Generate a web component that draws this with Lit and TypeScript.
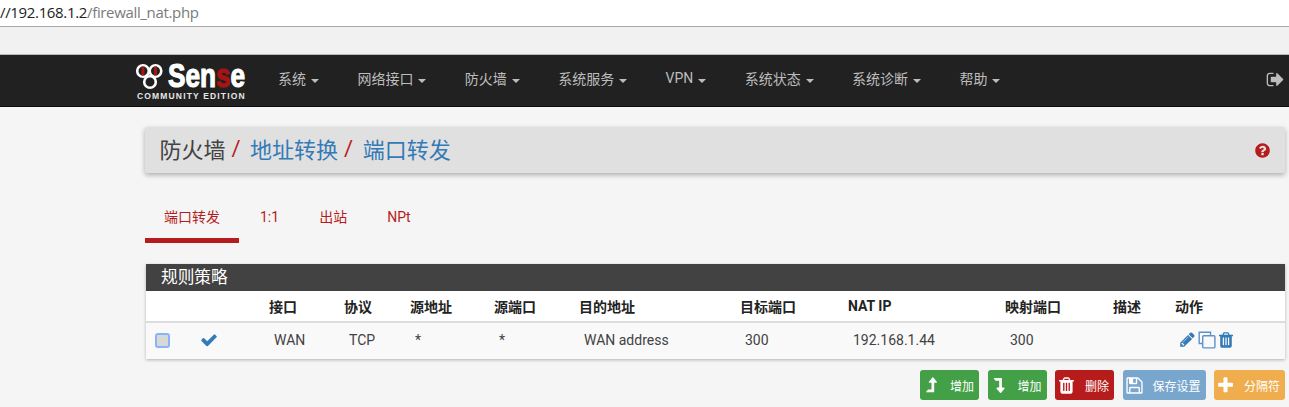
import { LitElement, html, css, svg } from "lit";
import { customElement } from "lit/decorators.js";

const ICON: Record<string, { vb: string; d: string }> = {
  check: { vb: "0 0 1792 1792", d: "M1671 566q0 40-28 68l-724 724-136 136q-28 28-68 28t-68-28l-136-136-362-362q-28-28-28-68t28-68l136-136q28-28 68-28t68 28l294 295 656-657q28-28 68-28t68 28l136 136q28 28 28 68z" },
  pencil: { vb: "0 0 1792 1792", d: "M491 1536l91-91-235-235-91 91v107h128v128h107zm523-928q0-22-22-22-10 0-17 7l-542 542q-7 7-7 17 0 22 22 22 10 0 17-7l542-542q7-7 7-17zm-54-192l416 416-832 832h-416v-416zm683 96q0 53-37 90l-166 166-416-416 166-165q36-38 90-38 53 0 91 38l235 234q37 39 37 91z" },
  trash: { vb: "0 0 1792 1792", d: "M704 1376v-704q0-14-9-23t-23-9h-64q-14 0-23 9t-9 23v704q0 14 9 23t23 9h64q14 0 23-9t9-23zm256 0v-704q0-14-9-23t-23-9h-64q-14 0-23 9t-9 23v704q0 14 9 23t23 9h64q14 0 23-9t9-23zm256 0v-704q0-14-9-23t-23-9h-64q-14 0-23 9t-9 23v704q0 14 9 23t23 9h64q14 0 23-9t9-23zm-544-992h448l-48-117q-7-9-17-11h-317q-10 2-17 11zm928 32v64q0 14-9 23t-23 9h-96v948q0 83-47 143.500t-113 60.500h-832q-66 0-113-58.500t-47-141.500v-952h-96q-14 0-23-9t-9-23v-64q0-14 9-23t23-9h309l70-167q15-37 54-63t79-26h320q40 0 79 26t54 63l70 167h309q14 0 23 9t9 23z" },
  question: { vb: "0 0 1792 1792", d: "M1024 1376v-192q0-14-9-23t-23-9h-192q-14 0-23 9t-9 23v192q0 14 9 23t23 9h192q14 0 23-9t9-23zm256-672q0-88-55.500-163t-138.500-116-170-41q-243 0-371 213-15 24 8 42l132 100q7 6 19 6 16 0 25-12 53-68 86-92 34-24 86-24 48 0 85.500 26t37.500 59q0 38-20 61t-68 45q-63 28-115.500 86.500t-52.500 125.500v36q0 14 9 23t23 9h192q14 0 23-9t9-23q0-19 21.500-49.500t54.500-49.500q32-18 49-28.500t46-35 44.500-48 28-60.500 12.500-81zm384 192q0 209-103 385.500t-279.500 279.500-385.500 103-385.500-103-279.500-279.500-103-385.500 103-385.500 279.500-279.500 385.500-103 385.500 103 279.500 279.500 103 385.500z" },
  signout: { vb: "0 0 1792 1792", d: "M704 1440q0 4 1 20t.5 26.500-3 23.500-10 19.500-20.500 6.500h-320q-119 0-203.500-84.500t-84.500-203.500v-704q0-119 84.500-203.500t203.500-84.500h320q13 0 22.500 9.500t9.500 22.500q0 4 1 20t.5 26.500-3 23.500-10 19.500-20.500 6.500h-320q-66 0-113 47t-47 113v704q0 66 47 113t113 47h312l11.500 1 11.500 3 8 5.500 7 9 2 13.500zm928-544q0 26-19 45l-544 544q-19 19-45 19t-45-19-19-45v-288h-448q-26 0-45-19t-19-45v-384q0-26 19-45t45-19h448v-288q0-26 19-45t45-19 45 19l544 544q19 19 19 45z" },
  plus: { vb: "0 0 1792 1792", d: "M1600 736v192q0 40-28 68t-68 28h-416v416q0 40-28 68t-68 28h-192q-40 0-68-28t-28-68v-416h-416q-40 0-68-28t-28-68v-192q0-40 28-68t68-28h416v-416q0-40 28-68t68-28h192q40 0 68 28t28 68v416h416q40 0 68 28t28 68z" },
  save: { vb: "0 0 1792 1792", d: "M512 1536h768v-384h-768v384zm896 0h128v-896q0-14-10-38.500t-20-34.500l-281-281q-10-10-34-20t-39-10v416q0 40-28 68t-68 28h-576q-40 0-68-28t-28-68v-416h-128v1280h128v-416q0-40 28-68t68-28h832q40 0 68 28t28 68v416zm-384-928v-320q0-13-9.500-22.500t-22.500-9.500h-192q-13 0-22.500 9.500t-9.500 22.500v320q0 13 9.500 22.500t22.500 9.500h192q13 0 22.500-9.500t9.500-22.500zm640 32v928q0 40-28 68t-68 28h-1344q-40 0-68-28t-28-68v-1344q0-40 28-68t68-28h928q40 0 88 20t76 48l280 280q28 28 48 76t20 88z" },
  up: { vb: "0 0 1792 1792", d: "M1402 603q-18 37-58 37h-192v864q0 14-9 23t-23 9h-704q-21 0-29-18-8-20 4-35l160-192q9-11 25-11h320v-640h-192q-40 0-58-37-17-37 9-68l320-384q18-22 49-22t49 22l320 384q27 32 9 68z" },
  down: { vb: "0 0 1792 1792", d: "M386 192h704q14 0 23 9t9 23v864h192q40 0 58 37t-9 68l-320 384q-18 22-49 22t-49-22l-320-384q-26-31-9-68 18-37 58-37h192v-640h-320q-16 0-25-11l-160-192q-12-15-4-35 8-18 29-18z" },
};

const icon = (n: string, s: number, cls = "") =>
  html`<svg class="ic ${cls}" width=${s} height=${s} viewBox=${ICON[n].vb} fill="currentColor"><path d=${ICON[n].d}></path></svg>`;

const NAV = ["系统", "网络接口", "防火墙", "系统服务", "VPN", "系统状态", "系统诊断", "帮助"];
const HEAD = ["", "", "接口", "协议", "源地址", "源端口", "目的地址", "目标端口", "NAT IP", "映射端口", "描述", "动作"];
const CELLS = ["WAN", "TCP", "*", "*", "WAN address", "300", "192.168.1.44", "300"];

@customElement("app-root")
export class AppRoot extends LitElement {
  static styles = css`
    :host {
      display: block;
      height: 407px;
      overflow: hidden;
      background: #f5f5f5;
      font-family: Roboto, "Noto Sans CJK SC", sans-serif;
      font-size: 14px;
      color: #333;
    }
    .ic { display: block; flex: none; }
    .url {
      box-sizing: border-box;
      background: #fff;
      border-bottom: 1px solid #a9a9a9;
      height: 27px;
      font: 15px/25px "Open Sans", sans-serif;
      color: #222;
      white-space: nowrap;
      letter-spacing: -0.34px;
    }
    .url span { color: #7a7a7a; }
    .chrome { height: 28px; background: #f1f1f1; border-bottom: 1px solid #b9b9b9; box-sizing: border-box; }
    .nav {
      height: 52px;
      box-sizing: border-box;
      background: #212121;
      border-bottom: 1px solid #0b0b0b;
      display: flex;
      align-items: center;
      padding: 0 5px 0 135px;
      color: #bdbdbd;
    }
    .logo { width: 143px; flex: none; display: flex; flex-direction: column; }
    .logo-top { display: flex; height: 30px; align-items: center; }
    .sense {
      font: 900 34px/30px "Liberation Sans", sans-serif;
      color: #fff;
      -webkit-text-stroke: 1.2px #fff;
      transform: scaleX(0.77);
      transform-origin: 0 50%;
      margin-left: 2px;
      white-space: nowrap;
      width: 78px;
    }
    .sense b { color: #a81414; -webkit-text-stroke: 1.2px #a81414; font-weight: 900; }
    .edition {
      font: 700 8.5px/10px "Liberation Sans", sans-serif;
      color: #e6e6e6;
      letter-spacing: 1.16px;
      margin: 1px 0 0 2px;
      white-space: nowrap;
    }
    .menu { display: flex; gap: 38.4px; flex: 1; padding-bottom: 6px; }
    .menu-item { display: flex; align-items: center; white-space: nowrap; }
    .caret {
      margin-left: 5px;
      margin-top: 6px;
      border-top: 4px solid currentColor;
      border-left: 4px solid transparent;
      border-right: 4px solid transparent;
    }
    .out { margin: -3px -1px 0 0; }
    .page { padding: 20px 4px 0 145px; }
    .crumb {
      height: 46px;
      background: #e0e0e0;
      border-radius: 2px;
      box-shadow: 0 2px 5px rgba(0, 0, 0, 0.3);
      display: flex;
      align-items: center;
      padding: 0 14px 4px 14.5px;
      box-sizing: border-box;
      font-size: 22px;
      color: #424242;
    }
    .crumb a { color: #337ab7; }
    .sep { color: #b71c1c; margin: 0 9.5px 0 6px; font-family: Roboto, sans-serif; }
    .crumb .grow { flex: 1; }
    .help { color: #b71c1c; margin-top: 4px; }
    .tabs { display: flex; margin-top: 22px; height: 48px; box-sizing: border-box; }
    .tab {
      padding: 0 20px;
      height: 48px;
      line-height: 44px;
      box-sizing: border-box;
      font-size: 14px;
      color: #b71c1c;
    }
    .tab.on { border-bottom: 5px solid #b71c1c; padding: 0 19px; width: 94px; margin-right: 1px; }
    .panel {
      margin: 21px 0 0 1px;
      background: #fff;
      box-shadow: 0 1px 3px rgba(0, 0, 0, 0.28);
    }
    .title {
      height: 27px;
      background: #424242;
      color: #fff;
      font-size: 16.7px;
      line-height: 27px;
      padding-left: 15px;
    }
    .row {
      display: grid;
      grid-template-columns: 49px 69px 75px 66px 84px 85px 161px 108px 157px 108px 62px 115px;
      align-items: center;
    }
    .head { height: 32px; border-bottom: 2px solid #ddd; box-sizing: border-box; font-weight: 700; color: #222; }
    .head div { padding: 0 0 0 5px; margin-top: -1px; }
    .body { height: 36px; background: #f9f9f9; box-sizing: border-box; color: #424242; }
    .cell { padding-left: 10px; margin-top: -3px; }
    .cb {
      width: 11px;
      height: 11px;
      margin: -1px 0 0 9px;
      background: #d8d8d8;
      border: 2px solid #8ab4f8;
      border-radius: 3px;
    }
    .ok { color: #337ab7; margin: -3px 0 0 5px; }
    .acts { display: flex; align-items: center; padding-left: 9px; color: #337ab7; margin-top: -3px; }
    .clone { color: #5d91cc; margin: 1px 0 0 2px; }
    .bin { margin-left: 1px; }
    .btns { display: flex; justify-content: flex-end; gap: 8.5px; margin-top: 11px; }
    .btn {
      height: 30px;
      box-sizing: border-box;
      border-radius: 3px;
      display: flex;
      align-items: center;
      justify-content: space-between;
      padding: 0 5px 0 2px;
      color: #fff;
      font-size: 12px;
      white-space: nowrap;
    }
    .g { background: #43a047; width: 59px; }
    .r { background: #b71c1c; width: 59px; }
    .b { background: #79a6cd; width: 83px; }
    .o { background: #f0ad4e; width: 71px; }
  `;

  render() {
    return html`
      <div class="url">//192.168.1.2<span>/firewall_nat.php</span></div>
      <div class="chrome"></div>
      <div class="nav">
        <div class="logo">
          <div class="logo-top">
            <svg width="31" height="30" viewBox="0 0 31 30" fill="none">
              ${svg`
                <circle cx="8" cy="11" r="5.8" stroke="#fff" stroke-width="2.6"/>
                <circle cx="20.5" cy="11" r="5.8" stroke="#fff" stroke-width="2.6"/>
                <circle cx="15" cy="22" r="5.8" stroke="#fff" stroke-width="2.6"/>
                <rect x="6.5" y="6.5" width="3" height="9" fill="#a81414"/>
                <rect x="19" y="6.5" width="3" height="9" fill="#a81414"/>
              `}
            </svg>
            <div class="sense">Sen<b>s</b>e</div>
          </div>
          <div class="edition">COMMUNITY EDITION</div>
        </div>
        <div class="menu">
          ${NAV.map((n) => html`<div class="menu-item">${n}<span class="caret"></span></div>`)}
        </div>
        ${icon("signout", 19, "out")}
      </div>
      <div class="page">
        <div class="crumb">
          <span>防火墙</span><span class="sep">/</span>
          <a>地址转换</a><span class="sep">/</span>
          <a>端口转发</a>
          <span class="grow"></span>
          <span class="help">${icon("question", 17)}</span>
        </div>
        <div class="tabs">
          <div class="tab on">端口转发</div>
          <div class="tab">1:1</div>
          <div class="tab">出站</div>
          <div class="tab">NPt</div>
        </div>
        <div class="panel">
          <div class="title">规则策略</div>
          <div class="row head">${HEAD.map((h) => html`<div>${h}</div>`)}</div>
          <div class="row body">
            <div class="cb"></div>
            <div class="ok">${icon("check", 18)}</div>
            ${CELLS.map((c) => html`<div class="cell">${c}</div>`)}
            <div></div>
            <div class="acts">
              ${icon("pencil", 17)}
              <svg class="ic clone" width="18" height="18" viewBox="0 0 18 18" fill="none" stroke="currentColor" stroke-width="1.4">
                ${svg`<path d="M4 12.5H1.2V1.2H12.5V4"/><rect x="4.7" y="4.7" width="12.2" height="12.2" rx="1"/>`}
              </svg>
              ${icon("trash", 18, "bin")}
            </div>
          </div>
        </div>
        <div class="btns">
          <div class="btn g">${icon("up", 19)}<span>增加</span></div>
          <div class="btn g">${icon("down", 19)}<span>增加</span></div>
          <div class="btn r">${icon("trash", 19)}<span>删除</span></div>
          <div class="btn b">${icon("save", 19)}<span>保存设置</span></div>
          <div class="btn o">${icon("plus", 19)}<span>分隔符</span></div>
        </div>
      </div>
    `;
  }
}
